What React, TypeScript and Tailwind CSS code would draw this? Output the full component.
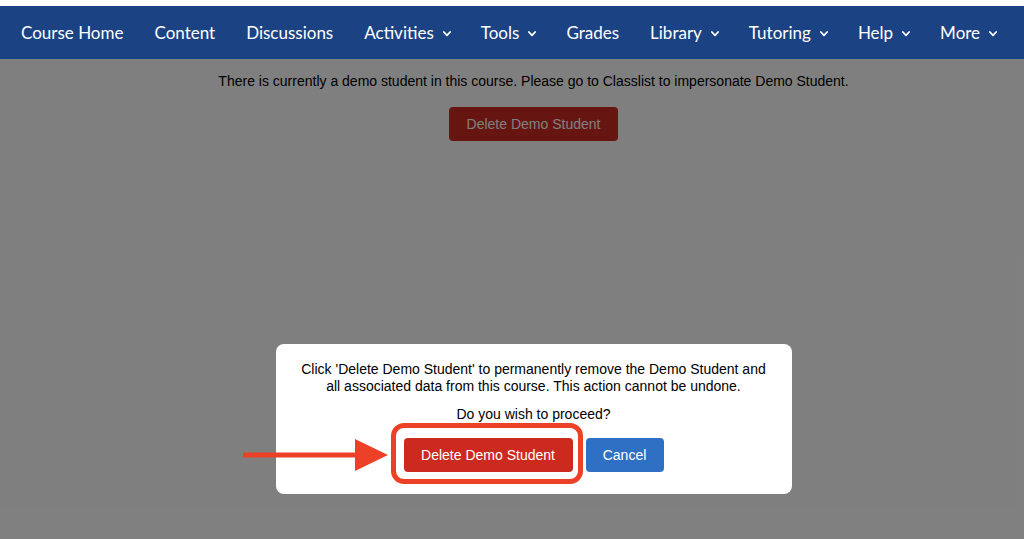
const navItems = [
  { label: "Course Home", menu: false },
  { label: "Content", menu: false },
  { label: "Discussions", menu: false },
  { label: "Activities", menu: true },
  { label: "Tools", menu: true },
  { label: "Grades", menu: false },
  { label: "Library", menu: true },
  { label: "Tutoring", menu: true },
  { label: "Help", menu: true },
  { label: "More", menu: true },
];

function Chevron() {
  return (
    <svg width="8" height="6" viewBox="0 0 8 6" className="mt-[2px]">
      <polyline points="0.9,1 4,4.3 7.1,1" fill="none" stroke="white" strokeWidth="1.8" strokeLinecap="round" strokeLinejoin="round" />
    </svg>
  );
}

function Arrow() {
  return (
    <svg width="145" height="32" viewBox="0 0 145 32" className="absolute right-[calc(100%+16px)] top-1/2 -translate-y-1/2">
      <rect x="0" y="13.5" width="114" height="5" fill="#ec4126" />
      <polygon points="112,0 145,16 112,32" fill="#ec4126" />
    </svg>
  );
}

export default function App() {
  return (
    <div className="relative h-[539px] overflow-hidden bg-white font-['Liberation_Sans',Arial,sans-serif]">
      {/* top strip + nav */}
      <div className="h-[6px] bg-white" />
      <nav className="h-[53px] bg-[#1b4383] flex items-center pl-[21px] gap-[31px] font-['Lato',sans-serif] text-[17px] text-white">
        {navItems.map((n) => (
          <div key={n.label} className={`flex items-center gap-[9px] ${n.menu ? "-mr-[1px]" : ""}`}>
            <span>{n.label}</span>
            {n.menu && <Chevron />}
          </div>
        ))}
      </nav>

      {/* page content */}
      <main className="pl-[43px] pt-[14px] flex flex-col items-center">
        <p className="text-[14px] leading-[17px] text-black">
          There is currently a demo student in this course. Please go to Classlist to impersonate Demo Student.
        </p>
        <button className="mt-[17px] h-[34px] w-[169px] rounded bg-[#cc2a20] text-white text-[14px]">
          Delete Demo Student
        </button>
      </main>

      {/* backdrop */}
      <div className="absolute inset-x-0 top-[59px] bottom-0 bg-black/50" />

      {/* dialog */}
      <div className="absolute inset-x-0 top-[59px] bottom-0 flex items-end justify-center pl-[43px] pb-[45px]">
        <div className="w-[516px] h-[150px] rounded-lg bg-white flex flex-col items-center pt-[17px] text-[14px] leading-[17px] text-black text-center">
          <p>
            Click 'Delete Demo Student' to permanently remove the Demo Student and
            <br />
            all associated data from this course. This action cannot be undone.
          </p>
          <p className="mt-[11px]">Do you wish to proceed?</p>
          <div className="mt-[15px] flex gap-[13px]">
            <div className="relative">
              <Arrow />
              <div className="absolute -left-[13px] -top-[15px] -right-[10px] -bottom-[12px] border-[5px] border-[#ec4126] rounded-[13px]" />
              <button className="relative h-[34px] w-[169px] rounded bg-[#cc2a1e] text-white">Delete Demo Student</button>
            </div>
            <button className="h-[34px] w-[78px] rounded bg-[#3070c4] text-white">Cancel</button>
          </div>
        </div>
      </div>
    </div>
  );
}
